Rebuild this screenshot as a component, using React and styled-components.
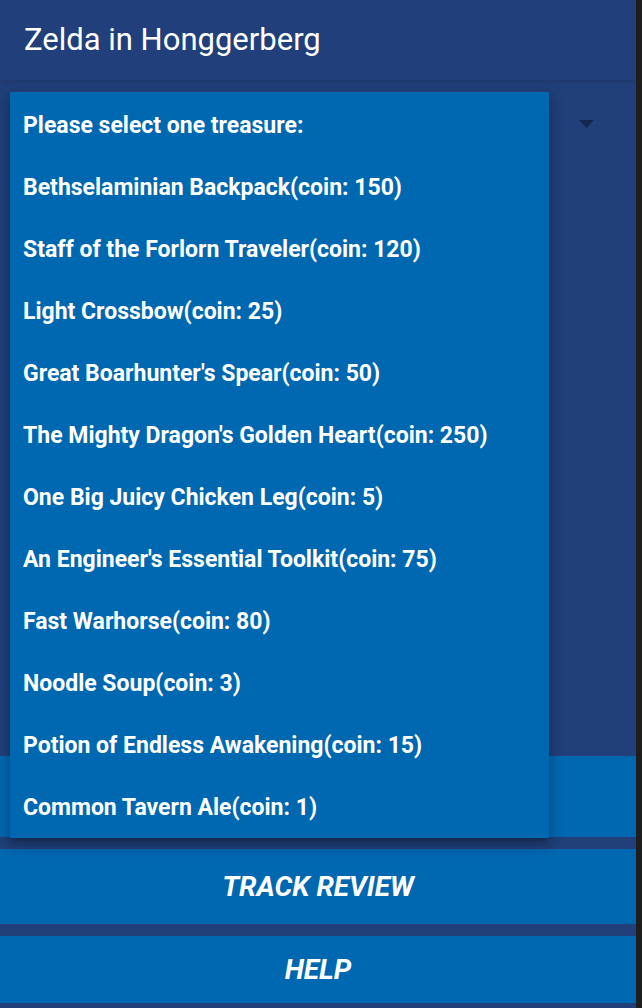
import styled, { createGlobalStyle } from "styled-components";

const GlobalStyle = createGlobalStyle`
  html, body {
    margin: 0;
    padding: 0;
    background: #1e1e1e;
  }
  * {
    box-sizing: border-box;
  }
`;

const Frame = styled.div`
  display: flex;
  width: 642px;
  height: 1008px;
  overflow: hidden;
  font-family: Roboto, "Liberation Sans", sans-serif;
`;

const Main = styled.div`
  position: relative;
  width: 636px;
  display: flex;
  flex-direction: column;
  background: #213f79;
`;

const Edge = styled.div`
  width: 6px;
  background: #1e1e1e;
`;

const Header = styled.header`
  height: 80px;
  display: flex;
  align-items: center;
  padding: 0 24px;
  background: #213f7a;
  box-shadow: 0 2px 4px rgba(0, 0, 0, 0.12);
  z-index: 1;
`;

const Title = styled.h1`
  margin: 0;
  color: #ffffff;
  font-size: 31px;
  font-weight: 400;
  padding-bottom: 2px;
`;

const SelectArea = styled.div`
  height: 676px;
  padding: 13px 42px 0 10px;
`;

const SelectRow = styled.div`
  height: 62px;
  display: flex;
  align-items: center;
  justify-content: flex-end;
`;

const ButtonList = styled.div`
  display: flex;
  flex-direction: column;
  gap: 12px;
`;

const ActionButton = styled.button`
  height: ${(p) => p.$h}px;
  border: none;
  background: #0067b1;
  color: #ffffff;
  font-family: Roboto, "Liberation Sans", sans-serif;
  font-size: 28px;
  font-weight: 700;
  font-style: italic;
  text-transform: uppercase;
  padding: 0;
`;

const Menu = styled.ul`
  position: absolute;
  left: 10px;
  top: 92px;
  width: 539px;
  margin: 0;
  padding: 2px 0 0;
  list-style: none;
  background: #0067b1;
  z-index: 2;
  box-shadow: 0 5px 5px -3px rgba(0, 0, 0, 0.2), 0 8px 10px 1px rgba(0, 0, 0, 0.14),
    0 3px 14px 2px rgba(0, 0, 0, 0.12);
`;

const MenuItem = styled.li`
  height: 62px;
  display: flex;
  align-items: center;
  padding: 0 13px;
  color: #ffffff;
  font-size: 23px;
  font-weight: 700;
  white-space: nowrap;
`;

const ArrowIcon = () => (
  <svg width="15" height="8" viewBox="0 0 15 8">
    <path d="M0 0h15L7.5 8z" fill="#16274d" />
  </svg>
);

const treasures = [
  ["Bethselaminian Backpack", 150],
  ["Staff of the Forlorn Traveler", 120],
  ["Light Crossbow", 25],
  ["Great Boarhunter's Spear", 50],
  ["The Mighty Dragon's Golden Heart", 250],
  ["One Big Juicy Chicken Leg", 5],
  ["An Engineer's Essential Toolkit", 75],
  ["Fast Warhorse", 80],
  ["Noodle Soup", 3],
  ["Potion of Endless Awakening", 15],
  ["Common Tavern Ale", 1],
];

export default function App() {
  return (
    <>
      <GlobalStyle />
      <Frame>
        <Main>
          <Header>
            <Title>Zelda in Honggerberg</Title>
          </Header>
          <SelectArea>
            <SelectRow>
              <ArrowIcon />
            </SelectRow>
          </SelectArea>
          <ButtonList>
            <ActionButton $h={81} />
            <ActionButton $h={75}>Track Review</ActionButton>
            <ActionButton $h={67}>Help</ActionButton>
          </ButtonList>
          <Menu>
            <MenuItem>Please select one treasure:</MenuItem>
            {treasures.map(([name, coin]) => (
              <MenuItem key={name}>
                {name}(coin: {coin})
              </MenuItem>
            ))}
          </Menu>
        </Main>
        <Edge />
      </Frame>
    </>
  );
}
